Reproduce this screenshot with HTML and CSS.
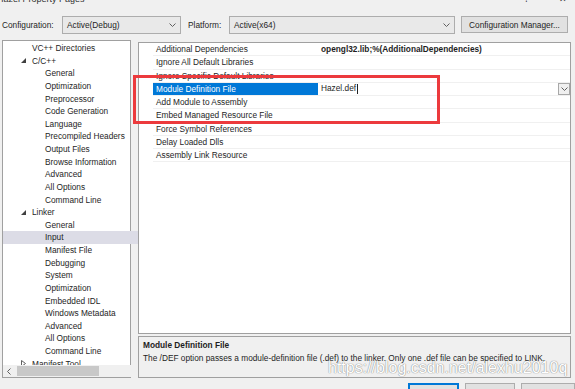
FILE: index.html
```html
<!DOCTYPE html>
<html lang="en">
<head>
    <meta charset="UTF-8">
    <meta name="viewport" content="width=device-width, initial-scale=1.0">
    <title>Hazel Property Pages</title>
    <link rel="stylesheet" href="styles.css">
</head>
<body>
    <div class="titlebar">
        <span class="title">Hazel Property Pages</span>
        <span class="title-btn help">?</span>
        <span class="title-btn close">✕</span>
    </div>

    <div class="toolbar">
        <span class="label config-label">Configuration:</span>
        <div class="combo config-combo">
            <span>Active(Debug)</span>
            <svg class="chev" width="7" height="4" viewBox="0 0 7 4"><polyline points="0.5,0.5 3.5,3.5 6.5,0.5" /></svg>
        </div>
        <span class="label platform-label">Platform:</span>
        <div class="combo platform-combo">
            <span>Active(x64)</span>
            <svg class="chev" width="7" height="4" viewBox="0 0 7 4"><polyline points="0.5,0.5 3.5,3.5 6.5,0.5" /></svg>
        </div>
        <button class="btn manager">Configuration Manager...</button>
    </div>

    <div class="main">
        <div class="tree">
            <ul class="tree-items">
                <li class="lvl1">VC++ Directories</li>
                <li class="lvl1 open"><svg class="tri" width="5" height="5" viewBox="0 0 5 5"><polygon points="5,0 5,5 0,5" /></svg>C/C++</li>
                <li class="lvl2">General</li>
                <li class="lvl2">Optimization</li>
                <li class="lvl2">Preprocessor</li>
                <li class="lvl2">Code Generation</li>
                <li class="lvl2">Language</li>
                <li class="lvl2">Precompiled Headers</li>
                <li class="lvl2">Output Files</li>
                <li class="lvl2">Browse Information</li>
                <li class="lvl2">Advanced</li>
                <li class="lvl2">All Options</li>
                <li class="lvl2">Command Line</li>
                <li class="lvl1 open"><svg class="tri" width="5" height="5" viewBox="0 0 5 5"><polygon points="5,0 5,5 0,5" /></svg>Linker</li>
                <li class="lvl2">General</li>
                <li class="lvl2 selected">Input</li>
                <li class="lvl2">Manifest File</li>
                <li class="lvl2">Debugging</li>
                <li class="lvl2">System</li>
                <li class="lvl2">Optimization</li>
                <li class="lvl2">Embedded IDL</li>
                <li class="lvl2">Windows Metadata</li>
                <li class="lvl2">Advanced</li>
                <li class="lvl2">All Options</li>
                <li class="lvl2">Command Line</li>
                <li class="lvl1 closed"><svg class="tri" width="5" height="7" viewBox="0 0 5 7"><polygon points="0.5,0.5 4.5,3.5 0.5,6.5" /></svg>Manifest Tool</li>
            </ul>
            <div class="vscroll">
                <svg class="arrow" width="7" height="4" viewBox="0 0 7 4"><polyline points="0.5,3.5 3.5,0.5 6.5,3.5" /></svg>
                <div class="vthumb"></div>
                <svg class="arrow down" width="7" height="4" viewBox="0 0 7 4"><polyline points="0.5,0.5 3.5,3.5 6.5,0.5" /></svg>
            </div>
            <div class="hscroll">
                <svg class="arrow" width="4" height="7" viewBox="0 0 4 7"><polyline points="3.5,0.5 0.5,3.5 3.5,6.5" /></svg>
                <div class="hthumb"></div>
                <svg class="arrow right" width="4" height="7" viewBox="0 0 4 7"><polyline points="0.5,0.5 3.5,3.5 0.5,6.5" /></svg>
            </div>
            <div class="corner"></div>
        </div>

        <div class="right">
            <div class="grid">
                <div class="row"><span class="gutter"></span><span class="name">Additional Dependencies</span><span class="value bold">opengl32.lib;%(AdditionalDependencies)</span></div>
                <div class="row"><span class="gutter"></span><span class="name">Ignore All Default Libraries</span><span class="value"></span></div>
                <div class="row"><span class="gutter"></span><span class="name">Ignore Specific Default Libraries</span><span class="value"></span></div>
                <div class="row active"><span class="gutter"></span><span class="name">Module Definition File</span><span class="value">Hazel.def<i class="caret"></i><span class="drop"><svg width="7" height="4" viewBox="0 0 7 4"><polyline points="0.5,0.5 3.5,3.5 6.5,0.5" /></svg></span></span></div>
                <div class="row"><span class="gutter"></span><span class="name">Add Module to Assembly</span><span class="value"></span></div>
                <div class="row"><span class="gutter"></span><span class="name">Embed Managed Resource File</span><span class="value"></span></div>
                <div class="row"><span class="gutter"></span><span class="name">Force Symbol References</span><span class="value"></span></div>
                <div class="row"><span class="gutter"></span><span class="name">Delay Loaded Dlls</span><span class="value"></span></div>
                <div class="row"><span class="gutter"></span><span class="name">Assembly Link Resource</span><span class="value"></span></div>
            </div>
            <div class="desc">
                <div class="desc-title">Module Definition File</div>
                <div class="desc-text">The /DEF option passes a module-definition file (.def) to the linker. Only one .def file can be specified to LINK.</div>
            </div>
        </div>
    </div>

    <div class="buttons">
        <button class="btn ok">OK</button>
        <button class="btn cancel">Cancel</button>
        <button class="btn apply">Apply</button>
    </div>

    <!-- annotation drawn over the screenshot -->
    <div class="mark"></div>
    <div class="watermark">https://blog.csdn.net/alexhu2010q</div>
</body>
</html>
```

FILE: styles.css
```css
body {
    margin: 0;
    width: 575px;
    height: 389px;
    overflow: hidden;
    position: relative;
    background: #f0f0f0;
    font-family: "Liberation Sans", Arial, sans-serif;
    font-size: 8.3px;
    color: #1e1e1e;
}
ul {
    list-style: none;
    margin: 0;
    padding: 0;
}
svg polyline {
    fill: none;
    stroke: #606060;
    stroke-width: 1;
}

.titlebar {
    height: 5px;
    display: flex;
    align-items: flex-end;
    overflow: hidden;
}
.title {
    line-height: 11px;
    font-size: 9px;
    margin-left: -3px;
    color: #333;
}
.title-btn {
    line-height: 11px;
    font-size: 9px;
    color: #333;
}
.help {
    margin-left: auto;
}
.close {
    margin-left: 30px;
    margin-right: 8px;
}

.toolbar {
    display: flex;
    align-items: center;
    height: 19px;
    margin-top: 10px;
    padding-left: 2px;
}
.label {
    flex: none;
}
.config-label {
    width: 60px;
}
.platform-label {
    width: 41px;
    margin-left: 7px;
}
.combo {
    box-sizing: border-box;
    height: 18px;
    display: flex;
    align-items: center;
    justify-content: space-between;
    padding: 0 4px 0 4px;
    background: #e9e9e9;
    border: 1px solid #adadad;
}
.config-combo {
    width: 119px;
}
.platform-combo {
    width: 226px;
}
.btn {
    box-sizing: border-box;
    font: inherit;
    color: #1e1e1e;
    background: #e1e1e1;
    border: 1px solid #adadad;
    padding: 0;
}
.manager {
    width: 107px;
    height: 17px;
    margin-left: 6px;
}

.main {
    display: flex;
    gap: 7px;
    height: 338px;
    margin-top: 6px;
    padding-left: 2px;
}
.tree {
    box-sizing: border-box;
    width: 129px;
    height: 338px;
    border: 1px solid #a0a0a0;
    background: #fff;
    display: grid;
    grid-template-columns: 1fr 12px;
    grid-template-rows: 1fr 12px;
}
.tree-items {
    overflow: hidden;
    padding-top: 1px;
}
.tree-items li {
    height: 12.625px;
    line-height: 12.625px;
    white-space: nowrap;
    display: flex;
    align-items: center;
}
.lvl1 {
    padding-left: 29px;
}
.lvl1.open,
.lvl1.closed {
    padding-left: 18px;
}
.tri {
    margin-right: 6px;
}
.tri polygon {
    fill: #404040;
}
.closed .tri polygon {
    fill: none;
    stroke: #606060;
}
.lvl2 {
    padding-left: 42px;
}
.selected {
    background: #dcdce6;
}
.vscroll {
    background: #f0f0f0;
    display: flex;
    flex-direction: column;
    align-items: center;
    padding-top: 6px;
}
.vthumb {
    width: 10px;
    height: 216px;
    margin-top: 31px;
    background: #c2c2c2;
}
.vscroll .down {
    margin-top: auto;
    margin-bottom: 4px;
}
.hscroll {
    background: #f0f0f0;
    display: flex;
    align-items: center;
    padding-left: 4px;
}
.hthumb {
    width: 82px;
    height: 10px;
    margin-left: 6px;
    background: #c8c8c8;
}
.hscroll .right {
    margin-left: 14px;
}
.corner {
    background: #f0f0f0;
}

.right {
    width: 433px;
    display: flex;
    flex-direction: column;
    gap: 2px;
    padding-top: 2px;
}
.grid {
    box-sizing: border-box;
    height: 292px;
    border: 1px solid #a0a0a0;
    background: #fff;
}
.row {
    display: grid;
    grid-template-columns: 14px 165px 1fr;
    height: 13.25px;
    line-height: 13.25px;
}
.name,
.value {
    box-sizing: border-box;
    border-bottom: 1px solid #f0f0f0;
    white-space: nowrap;
    overflow: hidden;
}
.name {
    padding-left: 3px;
}
.value {
    padding-left: 3px;
    display: flex;
    align-items: center;
}
.bold {
    font-weight: bold;
}
.active .name {
    background: #0078d7;
    color: #fff;
}
.caret {
    width: 1px;
    height: 10px;
    background: #222;
    margin-left: 1px;
}
.drop {
    box-sizing: border-box;
    width: 12px;
    height: 12px;
    margin-left: auto;
    margin-right: 0;
    border: 1px solid #a8a8a8;
    background: #f0f0f0;
    display: flex;
    align-items: center;
    justify-content: center;
}
.desc {
    box-sizing: border-box;
    height: 42px;
    border: 1px solid #a0a0a0;
    background: #f0f0f0;
    padding: 2px 4px;
    line-height: 12.5px;
}
.desc-title {
    font-weight: bold;
}

.buttons {
    display: flex;
    margin-top: 5px;
    padding-left: 408px;
    gap: 6px;
}
.buttons .btn {
    height: 22px;
}
.ok {
    width: 51px;
    border: 2px solid #0078d7;
}
.cancel {
    width: 51px;
}
.apply {
    width: 54px;
    color: #999;
}

.mark {
    position: absolute;
    left: 133px;
    top: 75px;
    width: 301px;
    height: 43px;
    border: 3px solid #ec3a3d;
}
.watermark {
    position: absolute;
    left: 328px;
    top: 359px;
    font-size: 16px;
    color: #fff;
    text-shadow: 0 0 1px #8a8a8a, 0 0 1px #8a8a8a;
    white-space: nowrap;
}
```
